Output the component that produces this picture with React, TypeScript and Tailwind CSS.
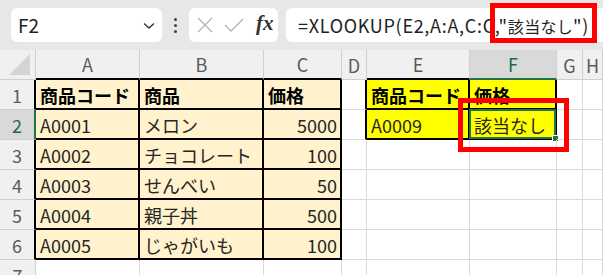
import React from "react";

const JP = { fontFamily: '"Noto Sans CJK JP", "Noto Sans", sans-serif' };

type Cell = { text?: string; bold?: boolean; right?: boolean; cls?: string; extra?: React.ReactNode };

const cols = ["A", "B", "C", "D", "E", "F", "G", "H"];

export default function App() {
  const tableRows: [string, string, string][] = [
    ["A0001", "メロン", "5000"],
    ["A0002", "チョコレート", "100"],
    ["A0003", "せんべい", "50"],
    ["A0004", "親子丼", "500"],
    ["A0005", "じゃがいも", "100"],
  ];

  const grid = "grid grid-cols-[36px_104px_124px_78px_25px_103px_87px_26px_1fr]";
  const gray = "border-r border-b border-[#dadada]";
  const tbl = "border-r-2 border-b-2 border-black bg-[#fff2cc]";

  const renderRow = (n: number, cells: Cell[]) => {
    const hdrSel = n === 2;
    const hdrBorder =
      n === 2
        ? "border-r-2 border-r-[#217346] border-b border-b-[#cfcfcf]"
        : n >= 1 && n <= 6
        ? "border-r-2 border-r-black border-b border-b-[#cfcfcf]"
        : "border-r border-b border-[#cfcfcf]";
    return (
      <div key={n} className={`${grid} h-[30px]`}>
        <div
          className={`${hdrBorder} flex items-center justify-center text-[18px] pt-[2px] ${
            hdrSel ? "bg-[#d9d9d9] text-[#1e6b42]" : "bg-[#f0f0f0] text-[#5a5a5a]"
          }`}
          style={JP}
        >
          {n}
        </div>
        {cells.map((c, i) => (
          <div
            key={i}
            className={`relative flex items-center pt-[2px] text-[18px] leading-none whitespace-nowrap ${
              c.right ? "justify-end pr-[3px]" : "pl-[4px]"
            } ${c.bold ? "font-bold text-black" : "text-[#262626]"} ${c.cls ?? gray}`}
            style={JP}
          >
            {c.text}
            {c.extra}
          </div>
        ))}
      </div>
    );
  };

  const empty: Cell = {};

  return (
    <div className="relative w-[603px] h-[275px] overflow-hidden bg-white">
      {/* formula bar */}
      <div className="h-[50px] bg-[#e7e7e7] flex items-start pt-[8px] pl-[11px]">
        <div className="w-[151px] h-[34px] bg-white rounded-[6px] flex items-center pl-[7px] pr-[7px] justify-between">
          <span className="text-[19px] text-[#222]" style={JP}>
            F2
          </span>
          <svg width="12" height="8" viewBox="0 0 12 8" className="mt-[1px]">
            <path d="M1 1.5 L6 6 L11 1.5" fill="none" stroke="#333" strokeWidth="1.4" />
          </svg>
        </div>
        <div className="w-[27px] h-[34px] flex flex-col items-center justify-center gap-[3px]">
          <div className="w-[3px] h-[3px] bg-[#444] rounded-full" />
          <div className="w-[3px] h-[3px] bg-[#444] rounded-full" />
          <div className="w-[3px] h-[3px] bg-[#444] rounded-full" />
        </div>
        <div className="w-[89px] h-[34px] bg-white rounded-[6px] flex items-center pl-[8px]">
          <svg width="16" height="16" viewBox="0 0 16 16">
            <path d="M1 1 L15 15 M15 1 L1 15" stroke="#b3b3b3" strokeWidth="1.3" />
          </svg>
          <svg width="20" height="14" viewBox="0 0 20 14" className="ml-[11px]">
            <path d="M1 7 L7 13 L19 1" fill="none" stroke="#b3b3b3" strokeWidth="1.3" />
          </svg>
          <span
            className="ml-[12px] text-[21px] italic font-bold text-[#333] leading-none -mt-[3px]"
            style={{ fontFamily: '"Liberation Serif", serif' }}
          >
            fx
          </span>
        </div>
        <div className="ml-[8px] flex-1 h-[34px] bg-white rounded-l-[6px] flex items-center pl-[12px] whitespace-nowrap overflow-hidden">
          <span className="text-[18px] text-[#222]" style={JP}>
            <span className="tracking-[0.7px]">=XLOOKUP(E2,A:A,C:C,"</span>
            <span className="text-[16px] tracking-[0.3px]">該当なし</span>
            <span className="tracking-[0.7px]">")</span>
          </span>
        </div>
      </div>

      {/* column headers */}
      <div className={`${grid} h-[30px]`}>
        <div className="bg-[#f0f0f0] border-r border-b border-[#cfcfcf] relative">
          <svg width="22" height="22" viewBox="0 0 22 22" className="absolute right-[4px] bottom-[3px]">
            <path d="M21 0 L21 21 L0 21 Z" fill="#d4d4d4" />
          </svg>
        </div>
        {cols.map((c) => {
          const sel = c === "F";
          const blackBottom = ["A", "B", "C", "E"].includes(c);
          return (
            <div
              key={c}
              className={`flex items-center justify-center text-[18px] pt-[1px] border-r border-r-[#cfcfcf] ${
                sel
                  ? "bg-[#d9d9d9] text-[#1e6b42] border-b-2 border-b-[#217346]"
                  : blackBottom
                  ? "bg-[#f0f0f0] text-[#5a5a5a] border-b-2 border-b-black"
                  : "bg-[#f0f0f0] text-[#5a5a5a] border-b border-b-[#cfcfcf]"
              }`}
              style={JP}
            >
              {c}
            </div>
          );
        })}
      </div>

      {/* row 1 */}
      {renderRow(1, [
        { text: "商品コード", bold: true, cls: tbl },
        { text: "商品", bold: true, cls: tbl },
        { text: "価格", bold: true, cls: tbl },
        { cls: "border-r-2 border-r-black border-b border-b-[#dadada]" },
        { text: "商品コード", bold: true, cls: "border-r-2 border-b-2 border-black bg-[#ffff00]" },
        { text: "価格", bold: true, cls: "border-r-2 border-b-2 border-black bg-[#ffff00]" },
        empty,
        empty,
      ])}
      {/* rows 2-6 */}
      {tableRows.map((r, idx) => {
        const n = idx + 2;
        const rest: Cell[] =
          n === 2
            ? [
                { cls: "border-r-2 border-r-black border-b border-b-[#dadada]" },
                { text: "A0009", cls: "border-r-2 border-b-2 border-black bg-[#ffff00]" },
                {
                  text: "該当なし",
                  cls: "border-r-2 border-b-2 border-black bg-[#ffff00]",
                  extra: (
                    <>
                      <div className="absolute -left-[1px] -top-[1px] -right-[1px] -bottom-[1px] border-2 border-[#217346]" />
                      <div className="absolute -right-[4px] -bottom-[4px] w-[7px] h-[7px] bg-[#217346] border border-white" />
                    </>
                  ),
                },
                empty,
                empty,
              ]
            : [empty, empty, empty, empty, empty];
        return renderRow(n, [
          { text: r[0], cls: tbl },
          { text: r[1], cls: tbl },
          { text: r[2], right: true, cls: tbl },
          ...rest,
        ]);
      })}
      {renderRow(7, [empty, empty, empty, empty, empty, empty, empty, empty])}

      {/* red annotation boxes */}
      <div className="absolute left-[490px] top-[3px] w-[107px] h-[40px] border-[5px] border-[#ff0000]" />
      <div className="absolute left-[458px] top-[98px] w-[111px] h-[54px] border-[5px] border-[#ff0000]" />
    </div>
  );
}
